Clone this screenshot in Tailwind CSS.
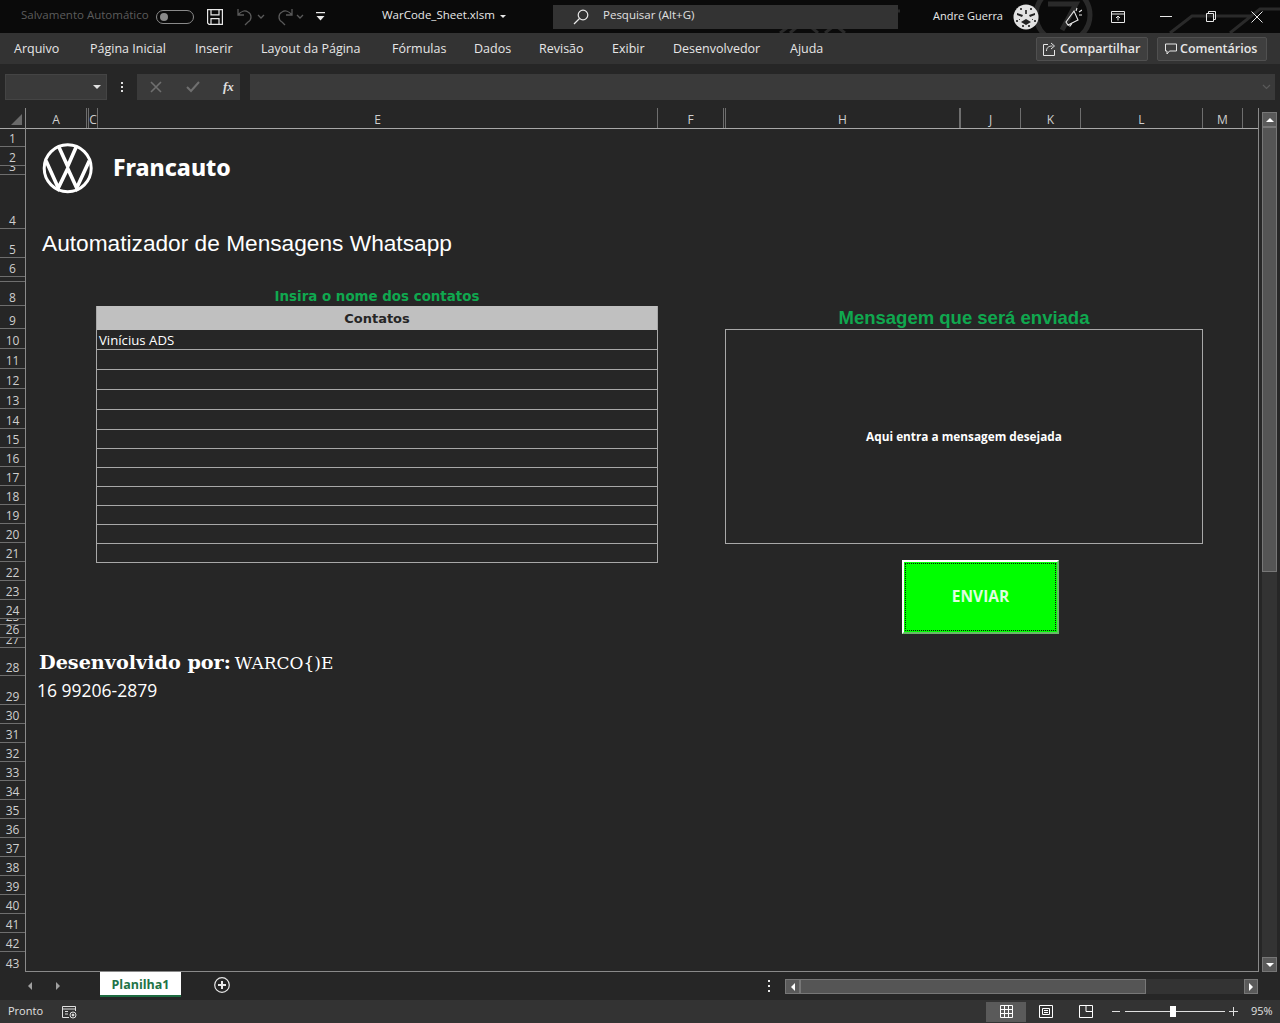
<!DOCTYPE html>
<html lang="pt-BR">

<head>
    <meta charset="UTF-8">
    <title>WarCode_Sheet.xlsm</title>
    <script src="https://cdn.jsdelivr.net/npm/@tailwindcss/browser@4"></script>
</head>

<body class="w-[1280px] h-[1023px] overflow-hidden flex flex-col bg-[#262626] font-['Open_Sans',sans-serif] text-white">

    <!-- title bar -->
    <div class="relative h-[33px] flex items-center bg-[#0a0a0a] text-[12px] shrink-0">
        <svg class="absolute left-[760px] top-0" width="520" height="33" fill="none" stroke="#2a2a2a" stroke-width="3">
            <circle cx="303" cy="15" r="27" stroke-width="5" />
            <path d="M288 4h28l-14 26" stroke-width="5" />
            <path d="M20 33l30-22h90M410 33l22-17h60M470 33l30-24h20M30 33l14-12 14 12M65 33l10-8 10 8" />
        </svg>
        <span class="relative ml-[21px] mb-[3px] w-[135px] text-[#5c5c5c] text-[11.5px]">Salvamento Automático</span>
        <div class="relative w-[38px] h-[14px] rounded-full border border-[#8a8a8a] flex items-center pl-[3px]">
            <div class="w-[8px] h-[8px] rounded-full bg-[#8a8a8a]"></div>
        </div>
        <svg class="relative ml-[13px]" width="16" height="16" viewBox="0 0 16 16" fill="none" stroke="#e8e8e8" stroke-width="1.2">
            <path d="M.6.6h14.8v14.8H2L.6 14zM4 .6v5.2h8V.6M4 15.4V9.6h8v5.8" />
        </svg>
        <svg class="relative ml-[13px]" width="30" height="18" viewBox="0 0 30 18" fill="none" stroke="#5a5a5a" stroke-width="1.3">
            <path d="M2 1v6h6M2 7c3-4 7-5 10-3 4 2 4 8 0 10l-3 3M22 7l3 3 3-3" />
        </svg>
        <svg class="relative ml-[10px]" width="30" height="18" viewBox="0 0 30 18" fill="none" stroke="#5a5a5a" stroke-width="1.3">
            <path d="M16 1v6h-6M16 7c-3-4-7-5-10-3-4 2-4 8 0 10l3 3M21 7l3 3 3-3" />
        </svg>
        <svg class="relative ml-[10px]" width="9" height="9" viewBox="0 0 9 9" fill="#e8e8e8">
            <path d="M0 0h9v1.2H0zM.5 4h8L4.5 8.5z" />
        </svg>
        <span class="relative ml-[57px] mb-[3px] w-[118px] text-[#e8e8e8] text-[11.5px]">WarCode_Sheet.xlsm</span>
        <span class="relative w-0 h-0 border-x-[3px] border-x-transparent border-t-[3px] border-t-[#e8e8e8]"></span>
        <div class="relative ml-[47px] w-[345px] h-[24px] bg-[#333333] flex items-center pl-[20px] text-[#e0e0e0] text-[11.5px]">
            <svg width="16" height="16" viewBox="0 0 16 16" fill="none" stroke="#e8e8e8" stroke-width="1.2">
                <circle cx="10" cy="6" r="4.8" />
                <path d="M6.5 9.5L1 15" />
            </svg>
            <span class="ml-[14px] mb-[3px]">Pesquisar (Alt+G)</span>
        </div>
        <span class="relative ml-[35px] w-[80px] text-[#e8e8e8] text-[11px]">Andre Guerra</span>
        <svg class="relative" width="26" height="26" viewBox="0 0 26 26">
            <circle cx="13" cy="13" r="12.5" fill="#e2e2e2" />
            <path d="M4 9l6 2-1 2-5-2zM22 9l-6 2 1 2 5-2zM8 18l5-3 5 3-5 3z" fill="#222" />
            <path d="M3 16h2v2H3zM21 16h2v2h-2zM7 4h2v2H7zM17 4h2v2h-2zM12 6h2v4h-2zM9 21h2v2H9zM15 21h2v2h-2zM6 15h1v1H6zM19 15h1v1h-1z" fill="#444" />
        </svg>
        <svg class="relative ml-[26px]" width="17" height="20" viewBox="0 0 17 20" fill="none" stroke="#e8e8e8" stroke-width="1.1">
            <path d="M9 4L1 15l2 3 10-5zM3 18l2 1 2-2.5M12 1l-1 3M14 5l3-2M14 8h3" />
        </svg>
        <svg class="relative ml-[29px]" width="14" height="12" viewBox="0 0 14 12" fill="none" stroke="#e8e8e8">
            <path d="M.5.5h13v11H.5zM.5 3h13M7 9.5V5M5 7l2-2 2 2" />
        </svg>
        <div class="relative ml-[35px] w-[12px] h-px bg-[#e8e8e8]"></div>
        <svg class="relative ml-[34px]" width="10" height="11" viewBox="0 0 10 11" fill="none" stroke="#e8e8e8">
            <path d="M.5 2.5h7v8h-7zM2.5 2.5v-2h7v8h-2" />
        </svg>
        <svg class="relative ml-[35px]" width="12" height="12" viewBox="0 0 12 12" fill="none" stroke="#e8e8e8">
            <path d="M.5.5l11 11M11.5.5l-11 11" />
        </svg>
    </div>

    <!-- ribbon tabs -->
    <div class="h-[31px] flex items-center bg-[#333333] text-[12.5px] text-[#e6e6e6] shrink-0">
        <span class="ml-[14px] w-[76px] mt-[2px]">Arquivo</span>
        <span class="w-[105px] mt-[2px]">Página Inicial</span>
        <span class="w-[66px] mt-[2px]">Inserir</span>
        <span class="w-[131px] mt-[2px]">Layout da Página</span>
        <span class="w-[82px] mt-[2px]">Fórmulas</span>
        <span class="w-[65px] mt-[2px]">Dados</span>
        <span class="w-[73px] mt-[2px]">Revisão</span>
        <span class="w-[61px] mt-[2px]">Exibir</span>
        <span class="w-[117px] mt-[2px]">Desenvolvedor</span>
        <span class="w-[246px] mt-[2px]">Ajuda</span>
        <div class="w-[112px] h-[24px] mt-[1px] flex items-center pl-[6px] gap-[3px] bg-[#3f3f3f] border border-[#505050] rounded-[2px] text-[12.5px] font-semibold">
            <svg width="14" height="14" viewBox="0 0 14 14" fill="none" stroke="#e6e6e6">
                <path d="M5 2.5H.5v11h11V8M3.5 9c0-4 3-5 6-5M8 1l3.5 3L8 7" />
            </svg>
            <span>Compartilhar</span>
        </div>
        <div class="ml-[9px] w-[110px] h-[24px] mt-[1px] flex items-center pl-[7px] gap-[3px] bg-[#3f3f3f] border border-[#505050] rounded-[2px] text-[12.5px] font-semibold">
            <svg width="12" height="12" viewBox="0 0 12 12" fill="none" stroke="#e6e6e6">
                <path d="M.5 1h11v7H4.5L2 11V8H.5z" />
            </svg>
            <span>Comentários</span>
        </div>
    </div>

    <!-- formula bar -->
    <div class="h-[44px] flex items-start pt-[10px] pl-[5px] shrink-0 bg-[#262626]">
        <div class="w-[102px] h-[26px] bg-[#3a3a3a] border border-[#444444] flex items-center justify-end pr-[5px]">
            <span class="w-0 h-0 border-x-[4px] border-x-transparent border-t-[4px] border-t-[#e0e0e0]"></span>
        </div>
        <div class="w-[30px] h-[26px] flex flex-col items-center justify-center gap-[2px]">
            <i class="w-[2px] h-[2px] bg-[#e0e0e0]"></i>
            <i class="w-[2px] h-[2px] bg-[#e0e0e0]"></i>
            <i class="w-[2px] h-[2px] bg-[#e0e0e0]"></i>
        </div>
        <div class="w-[103px] h-[26px] bg-[#3a3a3a] flex items-center pl-[13px]">
            <svg width="12" height="12" viewBox="0 0 12 12" fill="none" stroke="#6f6f6f" stroke-width="1.6">
                <path d="M1 1l10 10M11 1L1 11" />
            </svg>
            <svg class="ml-[24px]" width="14" height="12" viewBox="0 0 14 12" fill="none" stroke="#6f6f6f" stroke-width="2">
                <path d="M1 6l4 4 8-9" />
            </svg>
            <span class="ml-[23px] font-['Liberation_Serif',serif] italic font-bold text-[13px] text-[#e0e0e0]">fx</span>
        </div>
        <div class="ml-[10px] w-[1025px] h-[26px] bg-[#3a3a3a] flex items-center justify-end pr-[4px]">
            <svg width="9" height="6" viewBox="0 0 9 6" fill="none" stroke="#5a5a5a" stroke-width="1.2">
                <path d="M1 1l3.5 3.5L8 1" />
            </svg>
        </div>
    </div>

    <!-- sheet -->
    <div class="h-[864px] flex shrink-0">

        <!-- row numbers -->
        <div class="w-[26px] shrink-0 border-r border-[#8a8a8a] text-[12px] text-[#cfcfcf] leading-[15px] text-center">
            <div class="h-[21px] flex items-end justify-end pr-[3px] pb-[3px] border-b border-[#a8a8a8]">
                <span class="w-0 h-0 border-l-[11px] border-l-transparent border-b-[11px] border-b-[#6a6a6a]"></span>
            </div>
            <div class="h-[18px] overflow-hidden flex items-end justify-center border-b border-[#6e6e6e]">1</div>
            <div class="h-[19px] overflow-hidden flex items-end justify-center border-b border-[#6e6e6e]">2</div>
            <div class="h-[9px] overflow-hidden flex items-end justify-center border-b border-[#6e6e6e]">3</div>
            <div class="h-[54px] overflow-hidden flex items-end justify-center border-b border-[#6e6e6e]">4</div>
            <div class="h-[29px] overflow-hidden flex items-end justify-center border-b border-[#6e6e6e]">5</div>
            <div class="h-[19px] overflow-hidden flex items-end justify-center border-b border-[#6e6e6e]">6</div>
            <div class="h-[5px] overflow-hidden flex items-end justify-center border-b border-[#6e6e6e]"></div>
            <div class="h-[24px] overflow-hidden flex items-end justify-center border-b border-[#6e6e6e]">8</div>
            <div class="h-[23px] overflow-hidden flex items-end justify-center border-b border-[#6e6e6e]">9</div>
            <div class="h-[20px] overflow-hidden flex items-end justify-center border-b border-[#6e6e6e]">10</div>
            <div class="h-[20px] overflow-hidden flex items-end justify-center border-b border-[#6e6e6e]">11</div>
            <div class="h-[20px] overflow-hidden flex items-end justify-center border-b border-[#6e6e6e]">12</div>
            <div class="h-[20px] overflow-hidden flex items-end justify-center border-b border-[#6e6e6e]">13</div>
            <div class="h-[20px] overflow-hidden flex items-end justify-center border-b border-[#6e6e6e]">14</div>
            <div class="h-[19px] overflow-hidden flex items-end justify-center border-b border-[#6e6e6e]">15</div>
            <div class="h-[19px] overflow-hidden flex items-end justify-center border-b border-[#6e6e6e]">16</div>
            <div class="h-[19px] overflow-hidden flex items-end justify-center border-b border-[#6e6e6e]">17</div>
            <div class="h-[19px] overflow-hidden flex items-end justify-center border-b border-[#6e6e6e]">18</div>
            <div class="h-[19px] overflow-hidden flex items-end justify-center border-b border-[#6e6e6e]">19</div>
            <div class="h-[19px] overflow-hidden flex items-end justify-center border-b border-[#6e6e6e]">20</div>
            <div class="h-[19px] overflow-hidden flex items-end justify-center border-b border-[#6e6e6e]">21</div>
            <div class="h-[19px] overflow-hidden flex items-end justify-center border-b border-[#6e6e6e]">22</div>
            <div class="h-[19px] overflow-hidden flex items-end justify-center border-b border-[#6e6e6e]">23</div>
            <div class="h-[19px] overflow-hidden flex items-end justify-center border-b border-[#6e6e6e]">24</div>
            <div class="h-[6px] overflow-hidden flex items-end justify-center border-b border-[#6e6e6e]">25</div>
            <div class="h-[13px] overflow-hidden flex items-end justify-center border-b border-[#6e6e6e]">26</div>
            <div class="h-[10px] overflow-hidden flex items-end justify-center border-b border-[#6e6e6e]">27</div>
            <div class="h-[28px] overflow-hidden flex items-end justify-center border-b border-[#6e6e6e]">28</div>
            <div class="h-[29px] overflow-hidden flex items-end justify-center border-b border-[#6e6e6e]">29</div>
            <div class="h-[19px] overflow-hidden flex items-end justify-center border-b border-[#6e6e6e]">30</div>
            <div class="h-[19px] overflow-hidden flex items-end justify-center border-b border-[#6e6e6e]">31</div>
            <div class="h-[19px] overflow-hidden flex items-end justify-center border-b border-[#6e6e6e]">32</div>
            <div class="h-[19px] overflow-hidden flex items-end justify-center border-b border-[#6e6e6e]">33</div>
            <div class="h-[19px] overflow-hidden flex items-end justify-center border-b border-[#6e6e6e]">34</div>
            <div class="h-[19px] overflow-hidden flex items-end justify-center border-b border-[#6e6e6e]">35</div>
            <div class="h-[19px] overflow-hidden flex items-end justify-center border-b border-[#6e6e6e]">36</div>
            <div class="h-[19px] overflow-hidden flex items-end justify-center border-b border-[#6e6e6e]">37</div>
            <div class="h-[19px] overflow-hidden flex items-end justify-center border-b border-[#6e6e6e]">38</div>
            <div class="h-[19px] overflow-hidden flex items-end justify-center border-b border-[#6e6e6e]">39</div>
            <div class="h-[19px] overflow-hidden flex items-end justify-center border-b border-[#6e6e6e]">40</div>
            <div class="h-[19px] overflow-hidden flex items-end justify-center border-b border-[#6e6e6e]">41</div>
            <div class="h-[19px] overflow-hidden flex items-end justify-center border-b border-[#6e6e6e]">42</div>
            <div class="h-[19px] overflow-hidden flex items-end justify-center">43</div>
        </div>

        <!-- cells -->
        <div class="w-[1233px] shrink-0 flex flex-col border-r border-[#8a8a8a] border-b">

            <div class="h-[21px] shrink-0 flex border-b border-[#a8a8a8] text-[12px] text-[#cfcfcf] leading-[24px] text-center">
                <div class="w-[61px] border-r border-[#6e6e6e]">A</div>
                <div class="w-[2px] border-r border-[#6e6e6e]"></div>
                <div class="w-[9px] border-r border-[#6e6e6e] overflow-hidden">C</div>
                <div class="w-[560px] border-r border-[#6e6e6e]">E</div>
                <div class="w-[66px] border-r border-[#6e6e6e]">F</div>
                <div class="w-[2px] border-r border-[#6e6e6e]"></div>
                <div class="w-[234px] border-r border-[#6e6e6e]">H</div>
                <div class="w-[1px] border-r border-[#6e6e6e]"></div>
                <div class="w-[60px] border-r border-[#6e6e6e]">J</div>
                <div class="w-[60px] border-r border-[#6e6e6e]">K</div>
                <div class="w-[122px] border-r border-[#6e6e6e]">L</div>
                <div class="w-[40px] border-r border-[#6e6e6e]">M</div>
            </div>

            <div class="flex flex-1">
                <!-- left block -->
                <div class="w-[632px] shrink-0 pt-[11px]">
                    <div class="h-[55px] pl-[16px] flex items-center">
                        <svg width="52" height="52" viewBox="0 0 52 52" fill="none" stroke="#ffffff" stroke-width="3.6">
                            <circle cx="25.7" cy="26.3" r="23.5" stroke-width="3" />
                            <path d="M16.3 3.7l9.4 20.6 9-20.6M4 18.7L16.3 46l9.4-19.5 9 19.5 12.6-27.3" />
                        </svg>
                        <span class="ml-[19px] text-[23px] font-extrabold font-['Noto_Sans',sans-serif]">Francauto</span>
                    </div>
                    <div class="mt-[34px] pl-[16px] h-[30px] leading-[28px] font-['Liberation_Sans',sans-serif] text-[22.7px]">Automatizador de Mensagens Whatsapp</div>
                    <div class="mt-[25px] h-[22px] pl-[70px] leading-[25px] text-center text-[13.4px] font-bold text-[#10a84f] font-['DejaVu_Sans',sans-serif]">Insira o nome dos contatos</div>
                    <div class="ml-[70px] w-[562px] border-x border-b border-[#a8a8a8] text-[13.2px]">
                        <div class="h-[24px] bg-[#c0c0c0] text-center text-[#262626] text-[13px] font-bold font-['DejaVu_Sans',sans-serif] leading-[25px]">Contatos</div>
                        <div class="h-[20px] border-b border-[#a8a8a8] pl-[2px] leading-[20px]">Vinícius ADS</div>
                        <div class="h-[20px] border-b border-[#a8a8a8]"></div>
                        <div class="h-[20px] border-b border-[#a8a8a8]"></div>
                        <div class="h-[20px] border-b border-[#a8a8a8]"></div>
                        <div class="h-[20px] border-b border-[#a8a8a8]"></div>
                        <div class="h-[19px] border-b border-[#a8a8a8]"></div>
                        <div class="h-[19px] border-b border-[#a8a8a8]"></div>
                        <div class="h-[19px] border-b border-[#a8a8a8]"></div>
                        <div class="h-[19px] border-b border-[#a8a8a8]"></div>
                        <div class="h-[19px] border-b border-[#a8a8a8]"></div>
                        <div class="h-[19px] border-b border-[#a8a8a8]"></div>
                        <div class="h-[18px]"></div>
                    </div>
                    <div class="mt-[88px] pl-[13px] h-[24px] flex items-center gap-[4px] whitespace-nowrap">
                        <span class="font-['DejaVu_Serif',serif] font-bold text-[19.2px]">Desenvolvido por:</span>
                        <span class="mt-[2px] font-['DejaVu_Serif',serif] text-[17px]">WARCO{)E</span>
                    </div>
                    <div class="mt-[3px] pl-[11px] text-[17.5px] leading-[24px]">16 99206-2879</div>
                </div>

                <!-- right block -->
                <div class="pt-[177px] pl-[67px]">
                    <div class="w-[478px] h-[23px] text-center font-['Liberation_Sans',sans-serif] font-bold text-[18.5px] leading-[23px] text-[#10a84f]">Mensagem que será enviada</div>
                    <div class="w-[478px] h-[215px] border border-[#a8a8a8] flex items-center justify-center text-[11.8px] font-bold">Aqui entra a mensagem desejada</div>
                    <div class="mt-[16px] ml-[177px] w-[157px] h-[74px] bg-[#00ff00] border-[2px] border-t-[#ffffff] border-l-[#ffffff] border-r-[#66bb66] border-b-[#66bb66] p-px">
                        <div class="w-full h-full border border-dotted border-[#111111] flex items-center justify-center text-[15.5px] font-bold text-[#dfffdf]">ENVIAR</div>
                    </div>
                </div>
            </div>
        </div>

        <!-- vertical scrollbar -->
        <div class="flex-1 flex flex-col items-center pt-[4px]">
            <div class="w-[15px] h-[15px] bg-[#5a5a5a] border border-[#777777] flex items-center justify-center">
                <span class="w-0 h-0 border-x-[4px] border-x-transparent border-b-[4px] border-b-[#ffffff]"></span>
            </div>
            <div class="w-[15px] flex-1 bg-[#333333] flex flex-col">
                <div class="h-[445px] bg-[#555555] border border-[#777777]"></div>
            </div>
            <div class="w-[15px] h-[15px] bg-[#5a5a5a] border border-[#777777] flex items-center justify-center">
                <span class="w-0 h-0 border-x-[4px] border-x-transparent border-t-[4px] border-t-[#ffffff]"></span>
            </div>
        </div>
    </div>

    <!-- sheet tabs -->
    <div class="h-[28px] flex items-start bg-[#262626] shrink-0">
        <span class="ml-[28px] mt-[10px] w-0 h-0 border-y-[4px] border-y-transparent border-r-[4px] border-r-[#a0a0a0]"></span>
        <span class="ml-[24px] mt-[10px] w-0 h-0 border-y-[4px] border-y-transparent border-l-[4px] border-l-[#a0a0a0]"></span>
        <div class="ml-[40px] w-[81px] h-[25px] pt-[4px] bg-white border-b-[2px] border-[#1d6b41] flex items-center justify-center text-[12.5px] font-bold text-[#217346]">Planilha1</div>
        <svg class="ml-[33px] mt-[5px]" width="16" height="16" viewBox="0 0 16 16" fill="none" stroke="#e8e8e8">
            <circle cx="8" cy="8" r="7.3" stroke-width="1.2" />
            <path d="M8 4v8M4 8h8" stroke-width="2" />
        </svg>
        <div class="ml-[538px] mt-[8px] h-[12px] flex flex-col justify-between">
            <i class="w-[2px] h-[2px] bg-[#e8e8e8]"></i>
            <i class="w-[2px] h-[2px] bg-[#e8e8e8]"></i>
            <i class="w-[2px] h-[2px] bg-[#e8e8e8]"></i>
        </div>
        <div class="ml-[15px] mt-[7px] w-[473px] h-[15px] flex bg-[#333333]">
            <div class="w-[15px] bg-[#5a5a5a] border border-[#777777] flex items-center justify-center">
                <span class="w-0 h-0 border-y-[4px] border-y-transparent border-r-[4px] border-r-[#ffffff]"></span>
            </div>
            <div class="w-[346px] bg-[#555555] border border-[#777777]"></div>
            <div class="ml-[98px] w-[14px] bg-[#5a5a5a] border border-[#777777] flex items-center justify-center">
                <span class="w-0 h-0 border-y-[4px] border-y-transparent border-l-[4px] border-l-[#ffffff]"></span>
            </div>
        </div>
    </div>

    <!-- status bar -->
    <div class="h-[23px] flex items-center bg-[#333333] text-[11px] text-[#e0e0e0] shrink-0">
        <span class="ml-[8px] w-[54px] font-medium">Pronto</span>
        <svg width="15" height="14" viewBox="0 0 15 14" fill="none" stroke="#e0e0e0">
            <path d="M7 12.5H.5v-11h13V6M.5 4h13M3 6.5h3M3 9h3" />
            <circle cx="11" cy="10" r="3" />
            <circle cx="11" cy="10" r="1" fill="#e0e0e0" />
        </svg>
        <div class="ml-[909px] w-[40px] h-[20px] bg-[#5a5a5a] flex items-center justify-center">
            <svg width="13" height="13" viewBox="0 0 13 13" fill="none" stroke="#ffffff">
                <path d="M.5.5h12v12H.5zM4.5.5v12M8.5.5v12M.5 4.5h12M.5 8.5h12" />
            </svg>
        </div>
        <svg class="ml-[13px]" width="14" height="13" viewBox="0 0 14 13" fill="none" stroke="#ffffff">
            <path d="M.5.5h13v12H.5zM3.5 3.5h7v6h-7zM5 5.5h4M5 7.5h4" />
        </svg>
        <svg class="ml-[26px]" width="14" height="13" viewBox="0 0 14 13" fill="none" stroke="#ffffff">
            <path d="M.5.5h13v12H.5zM7 .5v6M7 6.5h6.5" />
        </svg>
        <div class="ml-[19px] w-[8px] h-px bg-[#e0e0e0]"></div>
        <div class="relative ml-[5px] w-[100px] h-px bg-[#e0e0e0]">
            <div class="absolute left-[45px] top-[-5px] w-[6px] h-[11px] bg-white"></div>
        </div>
        <svg class="ml-[4px]" width="9" height="9" viewBox="0 0 9 9" stroke="#e0e0e0">
            <path d="M4.5 0v9M0 4.5h9" />
        </svg>
        <span class="ml-[13px]">95%</span>
    </div>

</body>

</html>
